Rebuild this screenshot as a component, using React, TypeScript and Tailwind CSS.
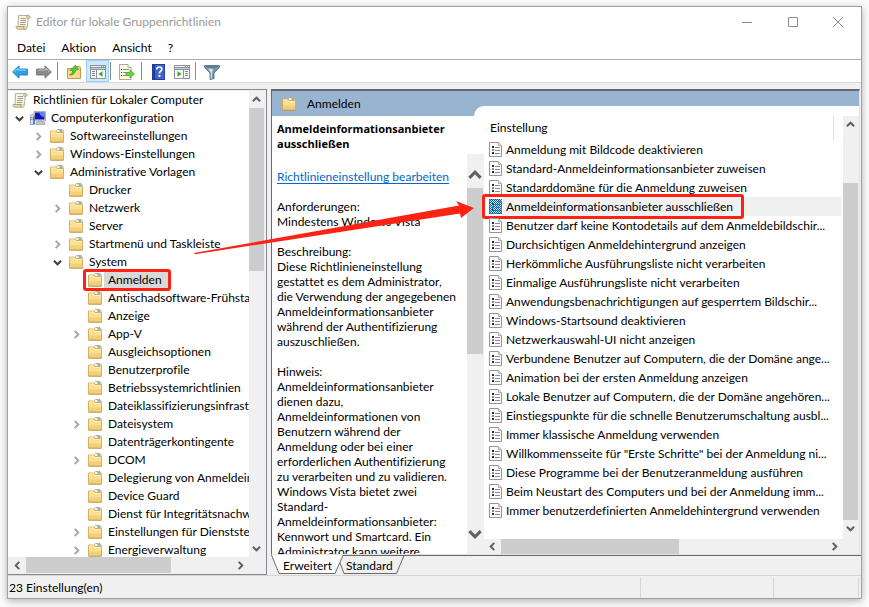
import React from 'react';
import clsx from 'clsx';

type TreeNode = { label: string; depth: number; state?: 'open' | 'closed'; icon?: 'scroll' | 'computer'; selected?: boolean };

const TREE: TreeNode[] = [
  { label: 'Richtlinien für Lokaler Computer', depth: 0, icon: 'scroll' },
  { label: 'Computerkonfiguration', depth: 1, state: 'open', icon: 'computer' },
  { label: 'Softwareeinstellungen', depth: 2, state: 'closed' },
  { label: 'Windows-Einstellungen', depth: 2, state: 'closed' },
  { label: 'Administrative Vorlagen', depth: 2, state: 'open' },
  { label: 'Drucker', depth: 3 },
  { label: 'Netzwerk', depth: 3, state: 'closed' },
  { label: 'Server', depth: 3 },
  { label: 'Startmenü und Taskleiste', depth: 3, state: 'closed' },
  { label: 'System', depth: 3, state: 'open' },
  { label: 'Anmelden', depth: 4, selected: true },
  { label: 'Antischadsoftware-Frühstart', depth: 4 },
  { label: 'Anzeige', depth: 4 },
  { label: 'App-V', depth: 4, state: 'closed' },
  { label: 'Ausgleichsoptionen', depth: 4 },
  { label: 'Benutzerprofile', depth: 4 },
  { label: 'Betriebssystemrichtlinien', depth: 4 },
  { label: 'Dateiklassifizierungsinfrastruktur', depth: 4 },
  { label: 'Dateisystem', depth: 4, state: 'closed' },
  { label: 'Datenträgerkontingente', depth: 4 },
  { label: 'DCOM', depth: 4, state: 'closed' },
  { label: 'Delegierung von Anmeldeinformationen', depth: 4 },
  { label: 'Device Guard', depth: 4 },
  { label: 'Dienst für Integritätsnachweis', depth: 4 },
  { label: 'Einstellungen für Dienststeuerung', depth: 4, state: 'closed' },
  { label: 'Energieverwaltung', depth: 4, state: 'closed' },
];

const INDENT = ['pl-[4px]', 'pl-[4px]', 'pl-[23px]', 'pl-[42px]', 'pl-[61px]'];

const SETTINGS = [
  'Anmeldung mit Bildcode deaktivieren',
  'Standard-Anmeldeinformationsanbieter zuweisen',
  'Standarddomäne für die Anmeldung zuweisen',
  'Anmeldeinformationsanbieter ausschließen',
  'Benutzer darf keine Kontodetails auf dem Anmeldebildschir...',
  'Durchsichtigen Anmeldehintergrund anzeigen',
  'Herkömmliche Ausführungsliste nicht verarbeiten',
  'Einmalige Ausführungsliste nicht verarbeiten',
  'Anwendungsbenachrichtigungen auf gesperrtem Bildschir...',
  'Windows-Startsound deaktivieren',
  'Netzwerkauswahl-UI nicht anzeigen',
  'Verbundene Benutzer auf Computern, die der Domäne ange...',
  'Animation bei der ersten Anmeldung anzeigen',
  'Lokale Benutzer auf Computern, die der Domäne angehören...',
  'Einstiegspunkte für die schnelle Benutzerumschaltung ausbl...',
  'Immer klassische Anmeldung verwenden',
  'Willkommensseite für "Erste Schritte" bei der Anmeldung ni...',
  'Diese Programme bei der Benutzeranmeldung ausführen',
  'Beim Neustart des Computers und bei der Anmeldung imm...',
  'Immer benutzerdefinierten Anmeldehintergrund verwenden',
];

const SELECTED_SETTING = 3;

const DESCRIPTION = [
  'Anforderungen:',
  'Mindestens Windows Vista',
  '',
  'Beschreibung:',
  'Diese Richtlinieneinstellung',
  'gestattet es dem Administrator,',
  'die Verwendung der angegebenen',
  'Anmeldeinformationsanbieter',
  'während der Authentifizierung',
  'auszuschließen.',
  '',
  'Hinweis:',
  'Anmeldeinformationsanbieter',
  'dienen dazu,',
  'Anmeldeinformationen von',
  'Benutzern während der',
  'Anmeldung oder bei einer',
  'erforderlichen Authentifizierung',
  'zu verarbeiten und zu validieren.',
  'Windows Vista bietet zwei',
  'Standard-',
  'Anmeldeinformationsanbieter:',
  'Kennwort und Smartcard. Ein',
  'Administrator kann weitere',
].join('\n');

/* ---------- Icons ---------- */

function ScrollIcon() {
  return (
    <svg width="16" height="16" viewBox="0 0 16 16" className="shrink-0">
      <path d="M3.500 1.500H13c1.300 0 1.900.6 1.900 1.500S14.300 4.500 13.200 4.500L12.500 12.500H3z" fill="#fbf5e0" stroke="#a39c84" strokeWidth=".8" />
      <path d="M11.800 2c-.6 1-.2 2.500 1.300 2.500 1.300 0 1.900-.6 1.900-1.500S14 1.500 13 1.500z" fill="#e3d3a0" stroke="#a39c84" strokeWidth=".7" />
      <path d="M1 12.500h8c-.4 1.300.1 2.700 1.500 2.700H3c-1.300 0-2.200-1.200-2-2.700z" fill="#ecdcaa" stroke="#a8976a" strokeWidth=".8" />
      <path d="M12.400 12.500c0 1.600-.7 2.700-2 2.700-1.100 0-1.600-1.300-1.300-2.700" fill="#f5ebc8" stroke="#a8976a" strokeWidth=".8" />
      <path d="M5.500 4.500h5.500M5.500 6.500h5.500M5.200 8.500h5.500M5 10.500h5.500" stroke="#93939b" strokeWidth=".9" />
    </svg>
  );
}

function ComputerIcon() {
  return (
    <svg width="16" height="16" viewBox="0 0 16 16" className="shrink-0">
      <path d="M4 1.500h11.500v9.500H4z" fill="#d8dde3" stroke="#a9b0b8" />
      <path d="M5 2.500h9.500v7H5z" fill="#1414b8" />
      <path d="M9 2.500h5.500v4.500c-2 .4-4-1-5.500-4.500z" fill="#5c86ea" />
      <path d="M8 11h4.500v1.500H15V14.500H6V12.500h2z" fill="#c3c8ce" stroke="#8a9199" strokeWidth=".6" />
      <path d="M.5 5.500L2 4.500 4.500 5.500v9H.5z" fill="#dfe6ee" stroke="#7b8ea3" strokeWidth=".8" />
      <path d="M1.300 7.500h1.200M1.300 9.500h1.200" stroke="#44658d" />
      <path d="M3 6.500h1.800V14H3z" fill="#4b7fbc" />
    </svg>
  );
}

function FolderIcon() {
  return (
    <svg width="16" height="16" viewBox="0 0 16 16" className="shrink-0">
      <path d="M7.500 3.500V2.500L8.500 1.500H13L14 2.500V5H7.500z" fill="#fdf3cf" stroke="#b9a56c" strokeWidth=".9" />
      <path d="M10.500 3h2.800" stroke="#3f97df" strokeWidth="1.300" />
      <path d="M1.500 3H6.500L8 4.500H14.500V14H1.500z" fill="#fbdf92" stroke="#cfab5c" strokeWidth=".9" />
      <path d="M2 9.500h12v4.200H2z" fill="#f3cf78" />
      <path d="M2.300 4h3.900l1.500 1.500h6.300" stroke="#fff2c6" fill="none" strokeWidth=".9" />
      <path d="M1.500 14.200H14.500" stroke="#b8903f" strokeWidth=".8" />
    </svg>
  );
}

function PolicyIcon({ selected }: { selected?: boolean }) {
  return (
    <svg width="14" height="16" viewBox="0 0 14 16" className="shrink-0">
      <path d="M.5.5H9.500L12.500 3.500V14.500H.5z" fill="#fcfcfc" stroke="#959595" />
      <path d="M9.500.5V3.500H12.500" fill="#e4e4e4" stroke="#b0b0b0" />
      <path d="M3 4h2v2H3zM3 10h2v2H3z" fill="#2b2b38" />
      <path d="M3 7h2v2H3z" fill="#8a84a0" />
      <path d="M6 5.500h5M6 8.500h5M6 11.500h5" stroke="#8c86a8" />
      {selected && (
        <>
          <defs>
            <pattern id="dither" width="2" height="2" patternUnits="userSpaceOnUse">
              <path d="M0 0h1v1H0zM1 1h1v1H1z" fill="#0067b8" shapeRendering="crispEdges" />
            </pattern>
          </defs>
          <rect width="13" height="15" fill="#0078d7" opacity=".2" />
          <rect width="13" height="15" fill="url(#dither)" />
        </>
      )}
    </svg>
  );
}

function ArrowIcon({ forward }: { forward?: boolean }) {
  return (
    <svg width="16" height="14" viewBox="0 0 16 14">
      {forward ? (
        <>
          <path d="M15.400 7L9 .8v3.200H.6v6H9v3.200z" fill="#8b8b8b" stroke="#6d6d6d" strokeWidth=".9" />
          <path d="M1.600 5h8.400V3.200L13.900 7" fill="none" stroke="#c4c4c4" />
        </>
      ) : (
        <>
          <path d="M.6 7L7 .8v3.200h8.400v6H7v3.200z" fill="#2aa4e8" stroke="#2a77ad" strokeWidth=".9" />
          <path d="M2.100 7L6 3.200V5h8.400" fill="none" stroke="#8fdcff" />
        </>
      )}
    </svg>
  );
}

function FolderUpIcon() {
  return (
    <svg width="16" height="16" viewBox="0 0 16 16">
      <path d="M8 3.500L9 2.500H13.500L14.500 3.500V14.500H1.500V4.500H7z" fill="#f0cd7c" stroke="#c39b49" />
      <path d="M2 7h12v7H2z" fill="#f9dc90" />
      <path d="M3.500 11c2-.6 3-2.300 3-4.700H4.300L9.300 1.200 12.500 5.300 9.500 6c0 3-2.500 5.500-6 5z" fill="#55c83c" stroke="#37921f" strokeWidth=".7" />
    </svg>
  );
}

function ConsoleIcon({ mirrored }: { mirrored?: boolean }) {
  return (
    <svg width="16" height="14" viewBox="0 0 16 14" shapeRendering="crispEdges">
      <path d="M0 0h16v14H0z" fill="#8a939c" />
      <path d="M1 1h10v1H1zM12 1h1v1h-1zM14 1h1v1h-1z" fill="#eef2f6" />
      <path d="M1 3h14v1H1z" fill="#c9d1d8" />
      {mirrored ? (
        <>
          <path d="M1 5h8v8H1zM10 5h5v8h-5z" fill="#fbfbfb" />
          <path d="M11 6h3v1h-3zM11 8h3v1h-3zM11 10h3v1h-3z" fill="#7d8791" />
          <path d="M3.500 6v6L7.500 9z" fill="#35b02c" shapeRendering="auto" />
        </>
      ) : (
        <>
          <path d="M1 5h5v8H1zM7 5h8v8H7z" fill="#fbfbfb" />
          <path d="M2 6h3v1H2zM2 8h3v1H2zM2 10h3v1H2z" fill="#7d8791" />
          <path d="M12.500 6v6L8.500 9z" fill="#35b02c" shapeRendering="auto" />
        </>
      )}
    </svg>
  );
}

function ExportIcon() {
  return (
    <svg width="16" height="16" viewBox="0 0 16 16">
      <path d="M.5.5h8.500l3 3v12H.5z" fill="#fdf8e4" stroke="#b0a98f" />
      <path d="M9 .5v3h3" fill="#fff" stroke="#b0a98f" />
      <path d="M2 5.500h1M2 8.500h1M2 11.500h1" stroke="#333" />
      <path d="M4 5.500h6M4 8.500h4M4 11.500h4" stroke="#8f8f8f" />
      <path d="M7 8.500h4V6l4.500 4-4.500 4v-2.500H7z" fill="#6cd04b" stroke="#3ba52b" strokeWidth=".7" />
    </svg>
  );
}

function HelpIcon() {
  return (
    <svg width="13" height="16" viewBox="0 0 13 16">
      <rect x=".5" y=".5" width="12" height="15" fill="#3f62cf" stroke="#22409f" />
      <path d="M1 1h2v14H1z" fill="#233c96" />
      <path d="M4.800 5.500c0-1.700 1-2.500 2.600-2.500s2.400.9 2.400 2.200c0 2-2.400 2-2.400 4.300" fill="none" stroke="#fff" strokeWidth="1.700" />
      <path d="M6.500 11h1.900v1.900H6.500z" fill="#fff" />
    </svg>
  );
}

function FunnelIcon() {
  return (
    <svg width="16" height="16" viewBox="0 0 16 16">
      <path d="M.6 1.500h14.800v1.800L10 9v5.500L6 15.500V9L.6 3.300z" fill="#7a94ab" stroke="#566f87" strokeWidth=".9" />
      <path d="M1.500 2h13L13 3.800H3z" fill="#5f7c97" />
      <path d="M4 4.800h5L8 9v5.500l-1.200.3V8.500z" fill="#d3e3ef" />
    </svg>
  );
}

type Direction = 'up' | 'down' | 'left' | 'right';

const CHEVRONS: Record<Direction, string> = {
  up: 'M1 7L5 3L9 7',
  down: 'M1 3L5 7L9 3',
  left: 'M7 1L3 5L7 9',
  right: 'M3 1L7 5L3 9',
};

function Chevron({ dir, large, className }: { dir: Direction; large?: boolean; className?: string }) {
  return (
    <svg width={large ? 14 : 9} height={large ? 14 : 9} viewBox="0 0 10 10" className={clsx('shrink-0', className)}>
      <path d={CHEVRONS[dir]} fill="none" stroke="currentColor" strokeWidth="2.200" />
    </svg>
  );
}

/* ---------- Pieces ---------- */

function ScrollButton({ dir, large, className }: { dir: Direction; large?: boolean; className?: string }) {
  return (
    <button type="button" aria-label={`Bildlauf ${dir}`} className={clsx('flex items-center justify-center shrink-0 text-[#606060]', className)}>
      <Chevron dir={dir} large={large} />
    </button>
  );
}

function ToolSeparator() {
  return <span className="w-px h-[18px] bg-[#8d8d8d]" />;
}

function ToolButton({ label, active, children }: { label: string; active?: boolean; children: React.ReactNode }) {
  return (
    <button
      type="button"
      aria-label={label}
      className={clsx('h-[22px] flex items-center justify-center border pt-px', active ? 'w-[23px] bg-[#cce8ff] border-[#99d1ff]' : 'w-6 border-transparent')}
    >
      {children}
    </button>
  );
}

function TreeRow({ node }: { node: TreeNode }) {
  return (
    <li className={clsx('h-[18px] flex items-center', INDENT[node.depth])}>
      {node.depth > 0 && (
        <span className="w-[15px] mr-[3px] flex justify-center shrink-0">
          {node.state && (
            <Chevron dir={node.state === 'open' ? 'down' : 'right'} className={node.state === 'open' ? 'text-[#404040]' : 'text-[#a6a6a6]'} />
          )}
        </span>
      )}
      <button type="button" className="relative h-[18px] flex items-center whitespace-nowrap">
        {node.icon === 'scroll' && <ScrollIcon />}
        {node.icon === 'computer' && <ComputerIcon />}
        {!node.icon && <FolderIcon />}
        <span className={clsx('h-[18px] pl-1 ml-px pr-1', node.selected && 'bg-[#d9d9d9] pr-1.5')}>{node.label}</span>
        {node.selected && <span className="absolute -top-[2px] -bottom-[2px] -left-[4px] -right-[3px] border-3 border-[#fc2314] rounded-[3px]" />}
      </button>
    </li>
  );
}

function TreePane() {
  return (
    <nav aria-label="Konsolenstruktur" className="w-[259px] shrink-0 bg-[#f0f0f0] border border-l-0 border-[#828790] flex flex-col p-px pl-0">
      <div className="flex-1 min-h-0 flex">
        <ul className="flex-1 min-w-0 overflow-hidden bg-white leading-[18px]">
          {TREE.map(node => <TreeRow key={node.label} node={node} />)}
        </ul>
        <div className="w-4 pr-px flex flex-col">
          <ScrollButton dir="up" className="h-[17px]" />
          <div className="h-[163px] bg-[#cdcdcd]" />
          <ScrollButton dir="down" className="h-[17px] mt-auto" />
        </div>
      </div>
      <div className="h-4 pr-4 flex">
        <ScrollButton dir="left" className="w-[18px]" />
        <div className="w-[145px] bg-[#cdcdcd]" />
        <ScrollButton dir="right" className="w-[17px] ml-auto" />
      </div>
    </nav>
  );
}

function DescriptionPane() {
  return (
    <section className="w-[212px] shrink-0 flex flex-col leading-[15px]">
      <h2 className="h-[38px] pt-[5px] pl-[5px] text-[11px] font-bold whitespace-nowrap font-['Open_Sans','Noto_Sans',sans-serif]">
        Anmeldeinformationsanbieter<br />ausschließen
      </h2>
      <div className="flex-1 min-h-0 flex">
        <div className="flex-1 min-w-0 overflow-hidden pt-[15px] pl-[5px] whitespace-nowrap">
          <a href="#bearbeiten" className="block text-[#0066cc] underline underline-offset-2">Richtlinieneinstellung bearbeiten</a>
          <p className="mt-[15px] whitespace-pre">{DESCRIPTION}</p>
        </div>
        <div className="w-[17px] pr-px bg-[#f0f0f0] flex flex-col">
          <ScrollButton dir="up" large className="h-[34px] pt-2" />
          <div className="h-[166px] bg-[#cdcdcd]" />
          <ScrollButton dir="down" large className="h-[41px] mt-auto" />
        </div>
      </div>
    </section>
  );
}

function SettingsPane() {
  return (
    <section className="flex-1 min-w-0 flex">
      <div className="flex-1 min-w-0 flex flex-col">
        <div className="flex-1 min-h-0">
          <table className="w-full table-fixed border-collapse">
            <thead>
              <tr className="h-6">
                <th className="p-0 font-normal text-left">
                  <span className="flex items-center h-6 ml-1.5 mr-[9px] border-r border-[#e0e0e0]">Einstellung</span>
                </th>
              </tr>
            </thead>
            <tbody>
              {SETTINGS.map((name, i) => (
                <tr key={name} className="h-[19px]">
                  <td className="p-0">
                    <div className="relative flex items-center h-[19px] pl-[5px] pr-px">
                      <PolicyIcon selected={i === SELECTED_SETTING} />
                      <span className={clsx('flex-1 min-w-0 h-[19px] leading-[19px] pl-[3px] whitespace-nowrap border-r border-[#ffffd8]', i === SELECTED_SETTING && 'bg-[#f0f0f0]')}>
                        {name}
                      </span>
                      {i === SELECTED_SETTING && (
                        <span className="absolute -top-[3px] -bottom-[3px] -left-[2px] w-[262px] border-3 border-[#fc2314] rounded-[3px]" />
                      )}
                    </div>
                  </td>
                </tr>
              ))}
            </tbody>
          </table>
        </div>
        <div className="h-[15px] bg-[#f0f0f0] flex">
          <ScrollButton dir="left" className="w-[17px]" />
          <div className="w-[178px] bg-[#cdcdcd]" />
          <ScrollButton dir="right" className="w-[17px] ml-auto" />
        </div>
      </div>
      <div className="w-4 pr-px bg-[#f0f0f0] flex flex-col pb-[15px]">
        <ScrollButton dir="up" className="h-[17px]" />
        <div className="h-[50px]" />
        <div className="h-[337px] bg-[#cdcdcd]" />
        <ScrollButton dir="down" className="h-[17px]" />
      </div>
    </section>
  );
}

function ResultTabs() {
  return (
    <div role="tablist" className="relative h-5 border-t border-[#696969] flex">
      <svg width="134" height="20" viewBox="0 0 134 20" className="absolute left-0 -top-px">
        <path d="M0 0L8 18.500H64L72 0z" fill="#fff" />
        <path d="M.5 0L8 18.500H64L72 .5H133L125.500 18.500H73L69 8" fill="none" stroke="#696969" />
      </svg>
      <button type="button" role="tab" aria-selected="true" className="relative w-[75px] pl-3 text-left">Erweitert</button>
      <button type="button" role="tab" aria-selected="false" className="relative w-[59px] text-left">Standard</button>
    </div>
  );
}

export default function App() {
  return (
    <div className="h-screen pt-[6px] pl-[7px] pr-[7px] pb-2 bg-[#fcfcfc] text-black text-[12px] leading-4 font-['Lato','Open_Sans',sans-serif] [font-variant-ligatures:none]">
      <div className="relative h-full flex flex-col bg-white border border-[#a0a0a0] shadow-[0_2px_8px_rgba(0,0,0,0.3)]">
        {/* Titelleiste */}
        <header className="h-[29px] shrink-0 flex items-center pl-[7px] text-[#999999]">
          <ScrollIcon />
          <h1 className="ml-[5px]">Editor für lokale Gruppenrichtlinien</h1>
          <div className="ml-auto flex h-full text-[#8c8c8c]">
            <button type="button" aria-label="Minimieren" className="w-[46px] flex items-center justify-center">
              <svg width="10" height="10" viewBox="0 0 10 10"><path d="M0 5.500h10" stroke="currentColor" /></svg>
            </button>
            <button type="button" aria-label="Maximieren" className="w-[45px] flex items-center justify-center">
              <svg width="10" height="10" viewBox="0 0 10 10"><path d="M.5.5h9v9h-9z" fill="none" stroke="currentColor" /></svg>
            </button>
            <button type="button" aria-label="Schließen" className="w-[46px] flex items-center justify-center">
              <svg width="10" height="10" viewBox="0 0 10 10"><path d="M0 0L10 10M10 0L0 10" stroke="currentColor" /></svg>
            </button>
          </div>
        </header>

        {/* Menü */}
        <div role="menubar" className="h-[23px] shrink-0 flex items-center gap-4 pl-[9px]">
          {['Datei', 'Aktion', 'Ansicht', '?'].map(item => (
            <button key={item} type="button" role="menuitem">{item}</button>
          ))}
        </div>

        <div role="toolbar" className="h-6 shrink-0 flex items-center border-y border-t-[#adadad] border-b-[#dadada]">
          <ToolButton label="Zurück"><ArrowIcon /></ToolButton>
          <ToolButton label="Vorwärts"><ArrowIcon forward /></ToolButton>
          <div className="flex items-center pl-px"><ToolSeparator /></div>
          <div className="flex pl-1 pr-px">
            <ToolButton label="Eine Ebene nach oben"><FolderUpIcon /></ToolButton>
            <ToolButton label="Konsolenstruktur ein-/ausblenden" active><ConsoleIcon /></ToolButton>
          </div>
          <ToolSeparator />
          <div className="flex pl-1 pr-0.5">
            <ToolButton label="Liste exportieren"><ExportIcon /></ToolButton>
          </div>
          <ToolSeparator />
          <div className="flex pl-1 pr-px">
            <ToolButton label="Hilfe"><HelpIcon /></ToolButton>
            <ToolButton label="Aktionsbereich ein-/ausblenden"><ConsoleIcon mirrored /></ToolButton>
          </div>
          <ToolSeparator />
          <div className="flex pl-1">
            <ToolButton label="Filter"><FunnelIcon /></ToolButton>
          </div>
        </div>

        <main className="flex-1 min-h-0 flex gap-1 pt-1.5 bg-[#f0f0f0]">
          <TreePane />
          <div className="flex-1 min-w-0 flex flex-col">
            <div className="flex-1 min-h-0 mr-px flex flex-col bg-white border-t-2 border-l border-[#696969] border-b border-b-[#e3e3e3] border-r border-r-[#e3e3e3]">
              <div className="h-[25px] shrink-0 flex bg-[#99b4d1]">
                <div className="w-[202px] flex items-center pl-[9px] gap-2.5">
                  <FolderIcon />
                  <span>Anmelden</span>
                </div>
                <div className="flex-1 h-[10px] self-end bg-white rounded-tl-[10px]" />
              </div>
              <div className="flex-1 min-h-0 flex">
                <DescriptionPane />
                <SettingsPane />
              </div>
            </div>
            <ResultTabs />
          </div>
        </main>

        <footer className="h-[23px] shrink-0 flex items-stretch bg-[#f0f0f0] border-t border-[#d5d5d5] pt-px pr-0.5">
          <span className="flex-1 flex items-center pl-px">23 Einstellung(en)</span>
          <span className="w-[133px] border-l border-[#d5d5d5]" />
          <span className="w-[86px] border-x border-[#d5d5d5]" />
        </footer>

        {/* Hinweispfeil vom Baum zur Einstellung */}
        <svg width="282" height="60" viewBox="0 0 282 60" className="absolute left-[185px] top-[190px] pointer-events-none">
          <path d="M1 56L266 8.500L263 4L281 11L268 21L267 16.500L2 57.200z" fill="#fc2314" />
        </svg>
      </div>
    </div>
  );
}
